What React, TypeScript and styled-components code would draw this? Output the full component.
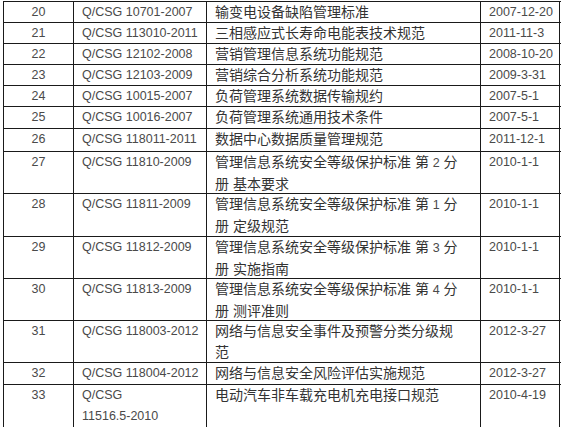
import React from 'react';
import styled, { createGlobalStyle } from 'styled-components';

const GlobalStyle = createGlobalStyle`
	html, body {
		margin: 0;
		padding: 0;
		background: #fff;
	}
	body {
		font-family: 'Liberation Sans', 'Noto Sans CJK SC', sans-serif;
		color: #333;
	}
`;

const Table = styled.div`
	margin: 1px 0 0 3px;
	width: 557px;
	border-top: 1px solid #1a1a1a;
	border-left: 1px solid #1a1a1a;
`;

const Row = styled.div<{ $h: number }>`
	display: grid;
	grid-template-columns: 70px 133px 274px 79px;
	height: ${(p) => p.$h}px;
	border-bottom: 1px solid #1a1a1a;
	box-sizing: border-box;
`;

const Cell = styled.div<{ $center?: boolean; $cjk?: boolean }>`
	border-right: 1px solid #1a1a1a;
	padding-left: ${(p) => (p.$center ? 0 : 8)}px;
	text-align: ${(p) => (p.$center ? 'center' : 'left')};
	font-size: ${(p) => (p.$cjk ? 14 : 12.5)}px;
	line-height: 21px;
	color: ${(p) => (p.$cjk ? '#333' : '#4a4a4a')};
	white-space: nowrap;
	overflow: hidden;
`;

const Line = styled.div`
	display: block;
`;

const Num = styled.span`
	font-size: 12.5px;
	color: #4a4a4a;
`;

interface Item {
	no: string;
	code: string[];
	name: React.ReactNode[];
	date: string;
	h: number;
}

const part = (n: string) => (
	<>
		管理信息系统安全等级保护标准 第 <Num>{n}</Num> 分
	</>
);

const items: Item[] = [
	{ no: '20', code: ['Q/CSG 10701-2007'], name: ['输变电设备缺陷管理标准'], date: '2007-12-20', h: 21 },
	{ no: '21', code: ['Q/CSG 113010-2011'], name: ['三相感应式长寿命电能表技术规范'], date: '2011-11-3', h: 21 },
	{ no: '22', code: ['Q/CSG 12102-2008'], name: ['营销管理信息系统功能规范'], date: '2008-10-20', h: 21 },
	{ no: '23', code: ['Q/CSG 12103-2009'], name: ['营销综合分析系统功能规范'], date: '2009-3-31', h: 21 },
	{ no: '24', code: ['Q/CSG 10015-2007'], name: ['负荷管理系统数据传输规约'], date: '2007-5-1', h: 21 },
	{ no: '25', code: ['Q/CSG 10016-2007'], name: ['负荷管理系统通用技术条件'], date: '2007-5-1', h: 22 },
	{ no: '26', code: ['Q/CSG 118011-2011'], name: ['数据中心数据质量管理规范'], date: '2011-12-1', h: 23 },
	{ no: '27', code: ['Q/CSG 11810-2009'], name: [part('2'), '册 基本要求'], date: '2010-1-1', h: 42 },
	{ no: '28', code: ['Q/CSG 11811-2009'], name: [part('1'), '册 定级规范'], date: '2010-1-1', h: 43 },
	{ no: '29', code: ['Q/CSG 11812-2009'], name: [part('3'), '册 实施指南'], date: '2010-1-1', h: 42 },
	{ no: '30', code: ['Q/CSG 11813-2009'], name: [part('4'), '册 测评准则'], date: '2010-1-1', h: 42 },
	{ no: '31', code: ['Q/CSG 118003-2012'], name: ['网络与信息安全事件及预警分类分级规', '范'], date: '2012-3-27', h: 42 },
	{ no: '32', code: ['Q/CSG 118004-2012'], name: ['网络与信息安全风险评估实施规范'], date: '2012-3-27', h: 22 },
	{ no: '33', code: ['Q/CSG', '11516.5-2010'], name: ['电动汽车非车载充电机充电接口规范'], date: '2010-4-19', h: 43 },
];

const App: React.FC = () => {
	return (
		<>
			<GlobalStyle />
			<Table>
				{items.map((it) => (
					<Row key={it.no} $h={it.h}>
						<Cell $center>{it.no}</Cell>
						<Cell>
							{it.code.map((c, i) => (
								<Line key={i}>{c}</Line>
							))}
						</Cell>
						<Cell $cjk>
							{it.name.map((n, i) => (
								<Line key={i}>{n}</Line>
							))}
						</Cell>
						<Cell>{it.date}</Cell>
					</Row>
				))}
			</Table>
		</>
	);
};

export default App;
